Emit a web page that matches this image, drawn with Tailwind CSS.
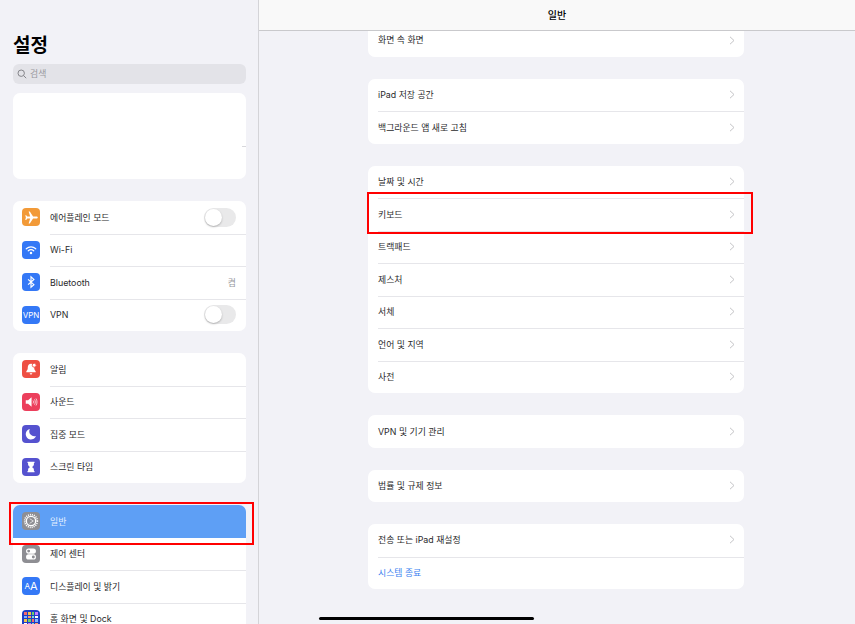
<!DOCTYPE html>
<html lang="ko">
<head>
    <meta charset="UTF-8">
    <meta name="viewport" content="width=device-width, initial-scale=1.0">
    <title>설정</title>
    <script src="https://cdn.jsdelivr.net/npm/@tailwindcss/browser@4"></script>
</head>
<body class="w-[855px] h-[624px] overflow-hidden bg-[#f2f2f7] font-['Inter','Noto_Sans_CJK_KR',sans-serif] text-[8.85px] text-[#2a2a2c]">
<div class="relative flex w-[855px] h-[624px] overflow-hidden">

    <!-- sidebar -->
    <aside class="w-[259px] h-[624px] shrink-0 overflow-hidden border-r border-[#d4d4d8] pl-[13px] pr-[12px] pt-[33px]">
        <h1 class="h-[24px] pt-[1px] text-[19px] leading-[24px] font-bold text-black">설정</h1>
        <div class="mt-[7px] flex h-[20px] items-center gap-[3px] rounded-[6px] bg-[#e3e3e8] pl-[4px] text-[#98989d]">
            <svg class="w-[10px] h-[10px]" viewBox="0 0 10 10" fill="none" stroke="#85858a" stroke-width="1"><circle cx="4.2" cy="4.2" r="3.2"/><path d="M6.6 6.6 9.2 9.2"/></svg>
            <span>검색</span>
        </div>
        <div class="relative mt-[9px] h-[86px] rounded-[7px] bg-white">
            <div class="absolute right-0 top-[53px] h-px w-[4px] bg-[#d8d8dc]"></div>
        </div>

        <div class="mt-[22px] rounded-[7px] bg-white">
            <div class="flex h-[32.5px] items-center pl-[9px]">
                <span class="flex h-[18px] w-[18px] shrink-0 items-center justify-center rounded-[4px] bg-[#f29a38]">
                    <svg class="w-[15px] h-[15px]" viewBox="0 0 24 24" fill="#fff"><path d="M22 12c0-1-1-1.600-2.200-1.600h-5.300L9.300 2.500H7.400l2.500 7.900H5.200L3.500 8.200H2l1 3.800-1 3.800h1.500l1.700-2.200h4.700l-2.500 7.900h1.900l5.200-7.900h5.300C21 13.600 22 13 22 12z"/></svg>
                </span>
                <div class="ml-[10px] flex h-full flex-1 items-center pr-[10px]">
                    <span class="flex-1">에어플레인 모드</span>
                    <span class="flex h-[19px] w-[32px] items-center rounded-full bg-[#e9e9ea] pl-px"><span class="h-[17px] w-[17px] rounded-full bg-white shadow-[0_1px_2px_rgba(0,0,0,0.25)]"></span></span>
                </div>
            </div>
            <div class="flex h-[32.5px] items-center pl-[9px]">
                <span class="flex h-[18px] w-[18px] shrink-0 items-center justify-center rounded-[4px] bg-[#3478f6]">
                    <svg class="w-[12px] h-[12px]" viewBox="0 0 24 24" fill="none" stroke="#fff" stroke-width="2.400" stroke-linecap="round"><path d="M2.500 9.500c5.500-5 13.500-5 19 0"/><path d="M6.500 13.500c3.200-2.800 7.800-2.800 11 0"/><circle cx="12" cy="18" r="1.300" fill="#fff"/></svg>
                </span>
                <div class="ml-[10px] flex h-full flex-1 items-center border-t border-[#e6e6ea] pb-px pr-[10px]">
                    <span class="flex-1">Wi-Fi</span>
                </div>
            </div>
            <div class="flex h-[32.5px] items-center pl-[9px]">
                <span class="flex h-[18px] w-[18px] shrink-0 items-center justify-center rounded-[4px] bg-[#3478f6]">
                    <svg class="w-[14px] h-[14px]" viewBox="0 0 24 24" fill="none" stroke="#fff" stroke-width="2"><path d="M7 7.500 17 16.500 12 21V3l5 4.500L7 16.500"/></svg>
                </span>
                <div class="ml-[10px] flex h-full flex-1 items-center border-t border-[#e6e6ea] pb-px pr-[10px]">
                    <span class="flex-1">Bluetooth</span>
                    <span class="text-[#98989d]">켬</span>
                </div>
            </div>
            <div class="flex h-[32.5px] items-center pl-[9px]">
                <span class="flex h-[18px] w-[18px] shrink-0 items-center justify-center rounded-[4px] bg-[#3478f6] text-[8px] text-white">VPN</span>
                <div class="ml-[10px] flex h-full flex-1 items-center border-t border-[#e6e6ea] pb-px pr-[10px]">
                    <span class="flex-1">VPN</span>
                    <span class="flex h-[19px] w-[32px] items-center rounded-full bg-[#e9e9ea] pl-px"><span class="h-[17px] w-[17px] rounded-full bg-white shadow-[0_1px_2px_rgba(0,0,0,0.25)]"></span></span>
                </div>
            </div>
        </div>

        <div class="mt-[22px] rounded-[7px] bg-white">
            <div class="flex h-[32.5px] items-center pl-[9px]">
                <span class="flex h-[18px] w-[18px] shrink-0 items-center justify-center rounded-[4px] bg-[#ee4f43]">
                    <svg class="w-[14px] h-[14px]" viewBox="0 0 24 24" fill="#fff"><path d="M12 3c-3.500 0-5.500 2.700-5.500 6 0 3.800-1 5.400-2.500 7v1.500h16V16c-1.500-1.600-2.500-3.200-2.500-7 0-3.300-2-6-5.500-6z"/><path d="M9.800 19.200h4.400a2.200 2.200 0 0 1-4.400 0z"/><circle cx="17.500" cy="5.500" r="3.400" stroke="#ee4f43" stroke-width="1.500"/></svg>
                </span>
                <div class="ml-[10px] flex h-full flex-1 items-center"><span>알림</span></div>
            </div>
            <div class="flex h-[32.5px] items-center pl-[9px]">
                <span class="flex h-[18px] w-[18px] shrink-0 items-center justify-center rounded-[4px] bg-[#ec3f5c]">
                    <svg class="w-[14px] h-[14px]" viewBox="0 0 24 24" fill="#fff"><path d="M3 9h4l6-5v16l-6-5H3z"/><path d="M15.500 9.500c1 1.500 1 3.500 0 5M18 7.500c1.800 2.800 1.800 6.200 0 9M20.500 6c2.400 3.700 2.400 8.300 0 12" fill="none" stroke="#fff" stroke-width="1.200"/></svg>
                </span>
                <div class="ml-[10px] flex h-full flex-1 items-center border-t border-[#e6e6ea] pb-px"><span>사운드</span></div>
            </div>
            <div class="flex h-[32.5px] items-center pl-[9px]">
                <span class="flex h-[18px] w-[18px] shrink-0 items-center justify-center rounded-[4px] bg-[#5552cf]">
                    <svg class="w-[14px] h-[14px]" viewBox="0 0 24 24" fill="#fff"><path d="M10 3.500a9 9 0 1 0 10.500 11.800A8.500 8.500 0 0 1 10 3.500z"/></svg>
                </span>
                <div class="ml-[10px] flex h-full flex-1 items-center border-t border-[#e6e6ea] pb-px"><span>집중 모드</span></div>
            </div>
            <div class="flex h-[32.5px] items-center pl-[9px]">
                <span class="flex h-[18px] w-[18px] shrink-0 items-center justify-center rounded-[4px] bg-[#5552cf]">
                    <svg class="w-[14px] h-[14px]" viewBox="0 0 24 24" fill="#fff"><path d="M6 3h12v2h-1v2.500c0 2-2 3.500-3.500 4.500 1.500 1 3.500 2.500 3.500 4.500V19h1v2H6v-2h1v-2.500c0-2 2-3.500 3.500-4.500C9 11 7 9.500 7 7.500V5H6z"/></svg>
                </span>
                <div class="ml-[10px] flex h-full flex-1 items-center border-t border-[#e6e6ea] pb-px"><span>스크린 타임</span></div>
            </div>
        </div>

        <div class="mt-[22px] rounded-[7px] bg-white">
            <div class="flex h-[32.5px] items-center rounded-t-[7px] bg-[#5e9ff5] pl-[9px]">
                <span class="flex h-[18px] w-[18px] shrink-0 items-center justify-center rounded-[4px] bg-[#8e8e93]">
                    <svg class="w-[16px] h-[16px]" viewBox="0 0 24 24" fill="none" stroke="#fff"><circle cx="12" cy="12" r="7" stroke-width="2"/><circle cx="12" cy="12" r="9.500" stroke-width="2.500" stroke-dasharray="1.500 1.500"/><path d="M10 8.500 15.500 12 10 15.500" stroke-width="1"/></svg>
                </span>
                <div class="ml-[10px] flex h-full flex-1 items-center text-[#e4efff]"><span>일반</span></div>
            </div>
            <div class="flex h-[32.5px] items-center pl-[9px]">
                <span class="flex h-[18px] w-[18px] shrink-0 items-center justify-center rounded-[4px] bg-[#8e8e93]">
                    <svg class="w-[14px] h-[14px]" viewBox="0 0 24 24" fill="#fff"><path fill-rule="evenodd" d="M8 2.500h8a4.500 4.500 0 0 1 0 9H8a4.500 4.500 0 0 1 0-9zm0 2a2.500 2.500 0 1 0 0 5 2.500 2.500 0 0 0 0-5zM8 12.500h8a4.500 4.500 0 0 1 0 9H8a4.500 4.500 0 0 1 0-9zm8 2a2.500 2.500 0 1 0 0 5 2.500 2.500 0 0 0 0-5z"/></svg>
                </span>
                <div class="ml-[10px] flex h-full flex-1 items-center"><span>제어 센터</span></div>
            </div>
            <div class="flex h-[32.5px] items-center pl-[9px]">
                <span class="flex h-[18px] w-[18px] shrink-0 items-center justify-center rounded-[4px] bg-[#3478f6] text-[9px] text-white"><span class="text-[8px]">A</span><span class="text-[11px]">A</span></span>
                <div class="ml-[10px] flex h-full flex-1 items-center border-t border-[#e6e6ea] pb-px"><span>디스플레이 및 밝기</span></div>
            </div>
            <div class="flex h-[32.5px] items-center pl-[9px]">
                <span class="grid h-[18px] w-[18px] shrink-0 grid-cols-4 gap-px rounded-[4px] bg-[#1f3fc4] p-[2px]">
                    <span class="bg-[#f56a6a]"></span><span class="bg-[#f5c04a]"></span><span class="bg-[#6ad06a]"></span><span class="bg-[#c77dff]"></span>
                    <span class="bg-[#7fb5ff]"></span><span class="bg-[#ff9f6a]"></span><span class="bg-[#7fe0d0]"></span><span class="bg-[#ffffff]"></span>
                    <span class="bg-[#f5c04a]"></span><span class="bg-[#6ad06a]"></span><span class="bg-[#f56a6a]"></span><span class="bg-[#7fb5ff]"></span>
                    <span class="bg-[#ffffff]"></span><span class="bg-[#c77dff]"></span><span class="bg-[#7fe0d0]"></span><span class="bg-[#ff9f6a]"></span>
                </span>
                <div class="ml-[10px] flex h-full flex-1 items-center border-t border-[#e6e6ea] pb-px"><span>홈 화면 및 Dock</span></div>
            </div>
        </div>
    </aside>

    <!-- detail -->
    <main class="flex-1 h-[624px] overflow-hidden">
        <header class="relative z-10 flex h-[31px] items-center justify-center border-b border-[#c9c9cc] bg-[#f9f9f9] text-[10px] font-medium text-black">일반</header>
        <div class="ml-[109px] w-[376px] -mt-[7px]">
            <div class="rounded-[7px] bg-white">
                <div class="flex h-[32.5px] items-center pl-[10px] pr-[9px]">
                    <span class="flex-1 pb-px">화면 속 화면</span>
                    <svg class="w-[6px] h-[9px]" viewBox="0 0 6 9" fill="none" stroke="#c4c4c7" stroke-width="1"><path d="M1 .8 5 4.500 1 8.200"/></svg>
                </div>
            </div>

            <div class="mt-[22px] rounded-[7px] bg-white">
                <div class="flex h-[32.5px] items-center pl-[10px]">
                    <div class="flex h-full flex-1 items-center pr-[9px]"><span class="flex-1">iPad 저장 공간</span>
                    <svg class="w-[6px] h-[9px]" viewBox="0 0 6 9" fill="none" stroke="#c4c4c7" stroke-width="1"><path d="M1 .8 5 4.500 1 8.200"/></svg></div>
                </div>
                <div class="flex h-[32.5px] items-center pl-[10px]">
                    <div class="flex h-full flex-1 items-center border-t border-[#e6e6ea] pb-px pr-[9px]"><span class="flex-1">백그라운드 앱 새로 고침</span>
                    <svg class="w-[6px] h-[9px]" viewBox="0 0 6 9" fill="none" stroke="#c4c4c7" stroke-width="1"><path d="M1 .8 5 4.500 1 8.200"/></svg></div>
                </div>
            </div>

            <div class="mt-[22px] rounded-[7px] bg-white">
                <div class="flex h-[32.5px] items-center pl-[10px]">
                    <div class="flex h-full flex-1 items-center pr-[9px]"><span class="flex-1">날짜 및 시간</span>
                    <svg class="w-[6px] h-[9px]" viewBox="0 0 6 9" fill="none" stroke="#c4c4c7" stroke-width="1"><path d="M1 .8 5 4.500 1 8.200"/></svg></div>
                </div>
                <div class="flex h-[32.5px] items-center pl-[10px]">
                    <div class="flex h-full flex-1 items-center border-t border-[#e6e6ea] pb-px pr-[9px]"><span class="flex-1">키보드</span>
                    <svg class="w-[6px] h-[9px]" viewBox="0 0 6 9" fill="none" stroke="#c4c4c7" stroke-width="1"><path d="M1 .8 5 4.500 1 8.200"/></svg></div>
                </div>
                <div class="flex h-[32.5px] items-center pl-[10px]">
                    <div class="flex h-full flex-1 items-center border-t border-[#e6e6ea] pb-px pr-[9px]"><span class="flex-1">트랙패드</span>
                    <svg class="w-[6px] h-[9px]" viewBox="0 0 6 9" fill="none" stroke="#c4c4c7" stroke-width="1"><path d="M1 .8 5 4.500 1 8.200"/></svg></div>
                </div>
                <div class="flex h-[32.5px] items-center pl-[10px]">
                    <div class="flex h-full flex-1 items-center border-t border-[#e6e6ea] pb-px pr-[9px]"><span class="flex-1">제스처</span>
                    <svg class="w-[6px] h-[9px]" viewBox="0 0 6 9" fill="none" stroke="#c4c4c7" stroke-width="1"><path d="M1 .8 5 4.500 1 8.200"/></svg></div>
                </div>
                <div class="flex h-[32.5px] items-center pl-[10px]">
                    <div class="flex h-full flex-1 items-center border-t border-[#e6e6ea] pb-px pr-[9px]"><span class="flex-1">서체</span>
                    <svg class="w-[6px] h-[9px]" viewBox="0 0 6 9" fill="none" stroke="#c4c4c7" stroke-width="1"><path d="M1 .8 5 4.500 1 8.200"/></svg></div>
                </div>
                <div class="flex h-[32.5px] items-center pl-[10px]">
                    <div class="flex h-full flex-1 items-center border-t border-[#e6e6ea] pb-px pr-[9px]"><span class="flex-1">언어 및 지역</span>
                    <svg class="w-[6px] h-[9px]" viewBox="0 0 6 9" fill="none" stroke="#c4c4c7" stroke-width="1"><path d="M1 .8 5 4.500 1 8.200"/></svg></div>
                </div>
                <div class="flex h-[32.5px] items-center pl-[10px]">
                    <div class="flex h-full flex-1 items-center border-t border-[#e6e6ea] pb-px pr-[9px]"><span class="flex-1">사전</span>
                    <svg class="w-[6px] h-[9px]" viewBox="0 0 6 9" fill="none" stroke="#c4c4c7" stroke-width="1"><path d="M1 .8 5 4.500 1 8.200"/></svg></div>
                </div>
            </div>

            <div class="mt-[22px] rounded-[7px] bg-white">
                <div class="flex h-[32.5px] items-center pl-[10px] pr-[9px]">
                    <span class="flex-1">VPN 및 기기 관리</span>
                    <svg class="w-[6px] h-[9px]" viewBox="0 0 6 9" fill="none" stroke="#c4c4c7" stroke-width="1"><path d="M1 .8 5 4.500 1 8.200"/></svg>
                </div>
            </div>

            <div class="mt-[22px] rounded-[7px] bg-white">
                <div class="flex h-[32.5px] items-center pl-[10px] pr-[9px]">
                    <span class="flex-1">법률 및 규제 정보</span>
                    <svg class="w-[6px] h-[9px]" viewBox="0 0 6 9" fill="none" stroke="#c4c4c7" stroke-width="1"><path d="M1 .8 5 4.500 1 8.200"/></svg>
                </div>
            </div>

            <div class="mt-[22px] rounded-[7px] bg-white">
                <div class="flex h-[32.5px] items-center pl-[10px]">
                    <div class="flex h-full flex-1 items-center pb-px pr-[9px]"><span class="flex-1">전송 또는 iPad 재설정</span>
                    <svg class="w-[6px] h-[9px]" viewBox="0 0 6 9" fill="none" stroke="#c4c4c7" stroke-width="1"><path d="M1 .8 5 4.500 1 8.200"/></svg></div>
                </div>
                <div class="flex h-[32.5px] items-center pl-[10px]">
                    <div class="flex h-full flex-1 items-center border-t border-[#e6e6ea] pb-[2px] text-[#3b82f0]">시스템 종료</div>
                </div>
            </div>
        </div>
    </main>

    <!-- annotation boxes and home indicator sit over the screenshot -->
    <div class="absolute left-[9px] top-[502px] h-[43px] w-[245px] border-2 border-[#ff0000]"></div>
    <div class="absolute left-[367px] top-[192px] h-[42px] w-[386px] border-2 border-[#ff0000]"></div>
    <div class="absolute left-[319px] top-[617px] h-[3px] w-[215px] rounded-full bg-black"></div>
</div>
</body>
</html>
